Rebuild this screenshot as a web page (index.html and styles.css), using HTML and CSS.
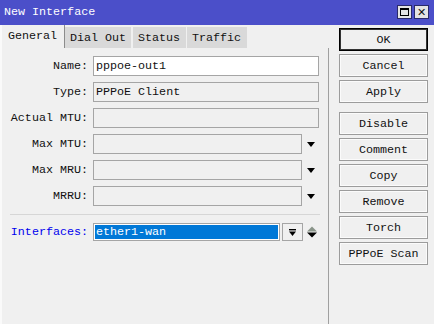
FILE: index.html
```html
<!DOCTYPE html>
<html lang="en">
<head>
    <meta charset="UTF-8">
    <title>New Interface</title>
    <link rel="stylesheet" href="styles.css">
</head>
<body>

    <div class="win">
        <div class="titlebar">
            <span class="title">New Interface</span>
            <span class="tbtn max"><span></span></span>
            <span class="tbtn close">&#x2715;</span>
        </div>

        <div class="body">
            <div class="main">
                <div class="tabs">
                    <div class="tab active">General</div>
                    <div class="tab">Dial Out</div>
                    <div class="tab">Status</div>
                    <div class="tab">Traffic</div>
                </div>

                <div class="panel">
                    <div class="form">
                        <label>Name:</label>
                        <div class="field edit">pppoe-out1</div>

                        <label>Type:</label>
                        <div class="field">PPPoE Client</div>

                        <label>Actual MTU:</label>
                        <div class="field"></div>

                        <label>Max MTU:</label>
                        <div class="combo"><div class="field"></div><span class="arrow"></span></div>

                        <label>Max MRU:</label>
                        <div class="combo"><div class="field"></div><span class="arrow"></span></div>

                        <label>MRRU:</label>
                        <div class="combo"><div class="field"></div><span class="arrow"></span></div>
                    </div>

                    <hr class="sep">

                    <div class="form">
                        <label class="blue">Interfaces:</label>
                        <div class="combo">
                            <div class="field sel"><span>ether1-wan</span></div>
                            <span class="drop">
                                <svg width="9" height="9" viewBox="0 0 9 9"><rect x="1" y="1" width="7" height="1.4" fill="#000"/><path d="M1 3.5h7L4.5 8z" fill="#000"/></svg>
                            </span>
                            <span class="updown">
                                <svg width="10" height="12" viewBox="0 0 10 12"><path d="M0 5.5L5 0.5 10 5.5z" fill="#8a958a"/><path d="M0 6.5h10L5 11.5z" fill="#000"/></svg>
                            </span>
                        </div>
                    </div>
                </div>
            </div>

            <div class="side">
                <button class="btn default">OK</button>
                <button class="btn">Cancel</button>
                <button class="btn">Apply</button>
                <button class="btn gap">Disable</button>
                <button class="btn">Comment</button>
                <button class="btn">Copy</button>
                <button class="btn">Remove</button>
                <button class="btn">Torch</button>
                <button class="btn">PPPoE Scan</button>
            </div>
        </div>
    </div>

</body>
</html>
```

FILE: styles.css
```css
* {
    box-sizing: border-box;
}

body {
    margin: 0;
    width: 434px;
    height: 324px;
    overflow: hidden;
    background: #f0f0f0;
    font-family: "Liberation Mono", "DejaVu Sans Mono", monospace;
    font-size: 11.7px;
    color: #111;
}

.win {
    height: 324px;
    border-left: 2px solid #fafafa;
}

/* title bar */
.titlebar {
    height: 25px;
    margin-left: -2px;
    background: #4b4fc9;
    display: flex;
    align-items: center;
    padding: 0 5px 1px 4px;
}

.title {
    color: #fff;
    flex: 1;
}

.tbtn {
    width: 15px;
    height: 14px;
    background: #e4e4e4;
    border: 1px solid #2a2a6a;
    margin-left: 2px;
    display: flex;
    align-items: center;
    justify-content: center;
    font-size: 11px;
    font-weight: bold;
    font-family: "DejaVu Sans", sans-serif;
    line-height: 1;
}

.tbtn.max span {
    width: 9px;
    height: 8px;
    border: 1px solid #000;
    border-top-width: 2px;
}

.body {
    display: flex;
}

/* left part with tabs */
.main {
    width: 327px;
}

.tabs {
    display: flex;
    align-items: flex-end;
    height: 23px;
    gap: 1px;
}

.tab {
    height: 21px;
    background: #d9d9d9;
    padding: 4px 5px 0 5px;
    white-space: nowrap;
}

.tab.active {
    height: 23px;
    background: #f0f0f0;
    padding: 4px 7px 0 6px;
    width: 63px;
    border-right: 1px solid #8c8c8c;
    margin-right: -1px;
}

.tab:nth-child(2) { width: 66px; }
.tab:nth-child(3) { width: 53px; margin-left: 1px; }
.tab:nth-child(4) { width: 60px; }

.panel {
    border-right: 1px solid #a0a0a0;
    height: 276px;
    padding-top: 8px;
}

.form {
    display: grid;
    grid-template-columns: 86px 226px;
    column-gap: 5px;
    row-gap: 6px;
}

.form label {
    text-align: right;
    line-height: 20px;
    height: 20px;
}

.form label.blue {
    color: #0000ee;
    line-height: 18px;
    height: 18px;
}

.field {
    height: 20px;
    border: 1px solid #a5a5a5;
    background: #f0f0f0;
    padding-left: 2px;
    line-height: 18px;
    white-space: nowrap;
}

.field.edit {
    background: #fff;
}

.combo {
    display: flex;
    align-items: center;
}

.combo .field {
    width: 209px;
}

.arrow {
    width: 0;
    height: 0;
    margin-left: 5px;
    border-left: 4.5px solid transparent;
    border-right: 4.5px solid transparent;
    border-top: 5px solid #000;
}

.sep {
    border: 0;
    border-top: 1px solid #d6d6d6;
    margin: 8px 8px 8px 8px;
}

.field.sel {
    width: 187px;
    height: 18px;
    background: #fff;
    padding: 1px;
    line-height: 14px;
}

.field.sel span {
    display: block;
    height: 14px;
    background: #0078d7;
    color: #fff;
    padding-left: 1px;
}

.drop {
    width: 21px;
    height: 18px;
    margin-left: 2px;
    border: 1px solid #a5a5a5;
    display: flex;
    align-items: center;
    justify-content: center;
}

.updown {
    margin-left: 4px;
    display: flex;
}

/* right buttons */
.side {
    padding: 3px 0 0 10px;
    display: flex;
    flex-direction: column;
    gap: 3px;
}

.btn {
    width: 89px;
    height: 23px;
    background: #f0f0f0;
    border: 1px solid #9c9c9c;
    box-shadow: inset 0 0 0 1px #fbfbfb;
    font-family: inherit;
    font-size: inherit;
    color: #111;
    padding: 0;
}

.btn.default {
    border: 1px solid #000;
    box-shadow: inset 0 0 0 1px #333;
}

.btn.gap {
    margin-top: 6px;
}
```
